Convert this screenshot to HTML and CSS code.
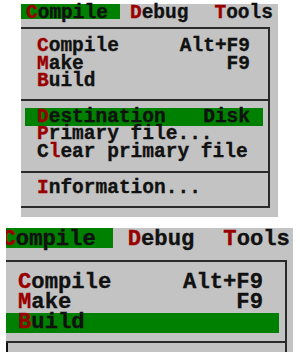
FILE: index.html
```html
<!DOCTYPE html>
<html lang="en">

<head>
    <meta charset="UTF-8">
    <title>Compile menu</title>
    <link rel="stylesheet" href="styles.css">
</head>

<body>
    <div class="screen screen--top">
        <div class="menubar">
            <span class="menubar__item menubar__item--active"><span class="hot">C</span>ompile</span>
            <span class="menubar__item menubar__item--debug"><span class="hot">D</span>ebug</span>
            <span class="menubar__item menubar__item--tools"><span class="hot">T</span>ools</span>
        </div>

        <div class="menu">
            <ul class="menu__group">
                <li class="menu__item"><span><span class="hot">C</span>ompile</span><span>Alt+F9</span></li>
                <li class="menu__item"><span><span class="hot">M</span>ake</span><span>F9</span></li>
                <li class="menu__item"><span><span class="hot">B</span>uild</span></li>
            </ul>
            <ul class="menu__group">
                <li class="menu__item menu__item--active"><span><span class="hot">D</span>estination</span><span>Disk</span></li>
                <li class="menu__item"><span><span class="hot">P</span>rimary file...</span></li>
                <li class="menu__item"><span>C<span class="hot">l</span>ear primary file</span></li>
            </ul>
            <ul class="menu__group">
                <li class="menu__item"><span><span class="hot">I</span>nformation...</span></li>
            </ul>
        </div>
    </div>

    <div class="screen screen--bottom">
        <div class="menubar">
            <span class="menubar__item menubar__item--active"><span class="hot">C</span>ompile</span>
            <span class="menubar__item menubar__item--debug"><span class="hot">D</span>ebug</span>
            <span class="menubar__item menubar__item--tools"><span class="hot">T</span>ools</span>
        </div>

        <div class="menu">
            <ul class="menu__group">
                <li class="menu__item"><span><span class="hot">C</span>ompile</span><span>Alt+F9</span></li>
                <li class="menu__item"><span><span class="hot">M</span>ake</span><span>F9</span></li>
                <li class="menu__item menu__item--active"><span><span class="hot">B</span>uild</span></li>
            </ul>
            <div class="menu__tail"></div>
        </div>
    </div>
</body>

</html>
```

FILE: styles.css
```css
body {
    margin: 0;
    background: #fff;
    color: #111;
    font-family: "Liberation Mono", "Courier New", monospace;
    font-weight: bold;
    -webkit-text-stroke: 0.35px currentColor;
}

ul {
    margin: 0;
    padding: 0;
    list-style: none;
}

.hot {
    color: #990000;
}

.screen {
    background: #c3c3c3;
}

.screen--top {
    width: 257px;
    height: 213px;
    margin: 4px 0 0 21px;
    font-size: 19.5px;
}

.screen--bottom {
    width: 287px;
    height: 124px;
    margin: 11px 0 0 6px;
    font-size: 22.2px;
    overflow: hidden;
}

/* menu bar */

.menubar {
    display: flex;
    white-space: pre;
}

.screen--top .menubar {
    height: 15px;
    line-height: 19px;
}

.screen--bottom .menubar {
    height: 20px;
    line-height: 24px;
    margin-left: -9.5px;
}

.menubar__item--active {
    background: #008000;
}

.screen--top .menubar__item--active {
    padding: 0 12px 0 5px;
}

.screen--top .menubar__item--debug {
    margin-left: 10px;
}

.screen--top .menubar__item--tools {
    margin-left: 26px;
}

.screen--bottom .menubar__item--active {
    padding: 0 17px 0 6px;
}

.screen--bottom .menubar__item--debug {
    margin-left: 15px;
}

.screen--bottom .menubar__item--tools {
    margin-left: 29px;
}

/* drop down */

.menu {
    border: 2px solid #2a2a2a;
    border-left: 0;
}

.screen--top .menu {
    width: 247px;
    margin-top: 8px;
}

.screen--bottom .menu {
    width: 286px;
    margin: 12px 0 0 -7px;
    border-bottom: 0;
}

.menu__group+.menu__group {
    border-top: 2px solid #2a2a2a;
}

.screen--top .menu__group {
    padding: 7px 0 9.5px;
}

.screen--top .menu__group:first-child {
    padding-top: 9px;
    padding-bottom: 8.5px;
}

.screen--top .menu__group:last-child {
    padding-bottom: 8.5px;
}

.screen--bottom .menu__group {
    padding: 11px 0 8px;
    border-bottom: 2px solid #2a2a2a;
}

.menu__item {
    display: flex;
    justify-content: space-between;
    white-space: pre;
}

.screen--top .menu__item {
    height: 17.5px;
    line-height: 17.5px;
    margin: 0 5px 0 4px;
    padding: 0 13px 0 12px;
}

.screen--bottom .menu__item {
    height: 20px;
    line-height: 20px;
    margin: 0 6px 0 5px;
    padding: 0 16px 0 14px;
}

.menu__item--active {
    background: #008000;
}

.screen--top .menu__item--active {
    height: 18px;
    line-height: 18px;
}

.menu__tail {
    width: 0;
    height: 9px;
    margin-left: 7px;
    border-left: 2px solid #111;
}
```
